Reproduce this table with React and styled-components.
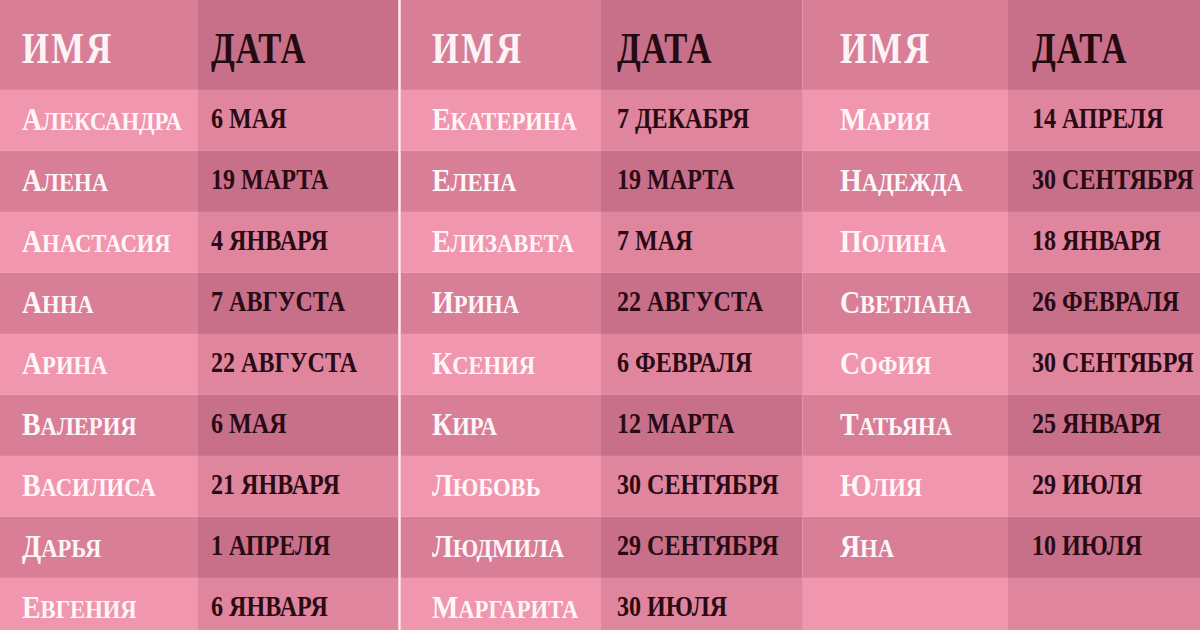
import React from "react";
import styled, { createGlobalStyle } from "styled-components";

const GlobalStyle = createGlobalStyle`
  html, body {
    margin: 0;
    padding: 0;
    width: 1200px;
    height: 630px;
    overflow: hidden;
    background: #f196af;
  }
`;

const columns = [
  {
    nameWidth: 198,
    dateWidth: 200,
    namePad: 22,
    datePad: 13,
    rows: [
      ["Александра", "6 мая"],
      ["Алена", "19 марта"],
      ["Анастасия", "4 января"],
      ["Анна", "7 августа"],
      ["Арина", "22 августа"],
      ["Валерия", "6 мая"],
      ["Василиса", "21 января"],
      ["Дарья", "1 апреля"],
      ["Евгения", "6 января"],
    ],
  },
  {
    nameWidth: 200,
    dateWidth: 201,
    namePad: 31,
    datePad: 16,
    rows: [
      ["Екатерина", "7 декабря"],
      ["Елена", "19 марта"],
      ["Елизавета", "7 мая"],
      ["Ирина", "22 августа"],
      ["Ксения", "6 февраля"],
      ["Кира", "12 марта"],
      ["Любовь", "30 сентября"],
      ["Людмила", "29 сентября"],
      ["Маргарита", "30 июля"],
    ],
  },
  {
    nameWidth: 205,
    dateWidth: 192,
    namePad: 37,
    datePad: 24,
    rows: [
      ["Мария", "14 апреля"],
      ["Надежда", "30 сентября"],
      ["Полина", "18 января"],
      ["Светлана", "26 февраля"],
      ["София", "30 сентября"],
      ["Татьяна", "25 января"],
      ["Юлия", "29 июля"],
      ["Яна", "10 июля"],
      ["", ""],
    ],
  },
];

// shade -> [name cell, date cell]
const palette = {
  dark: ["#d87e97", "#c86f89"],
  light: ["#f196af", "#df859e"],
};

function App() {
  return (
    <>
      <GlobalStyle />
      <Page>
        {columns.map((col, i) => (
          <React.Fragment key={i}>
            {i === 1 && <Divider />}
            {i === 2 && <Seam />}
            <Table $name={col.nameWidth} $date={col.dateWidth}>
              <NameCell $shade="dark" $pad={col.namePad} $head>
                <HeadText $light>Имя</HeadText>
              </NameCell>
              <DateCell $shade="dark" $pad={col.datePad} $head>
                <HeadText>Дата</HeadText>
              </DateCell>
              {col.rows.map(([name, date], r) => {
                const shade = r % 2 === 0 ? "light" : "dark";
                return (
                  <React.Fragment key={r}>
                    <NameCell $shade={shade} $pad={col.namePad}>
                      <NameText>{name}</NameText>
                    </NameCell>
                    <DateCell $shade={shade} $pad={col.datePad}>
                      <DateText>{date}</DateText>
                    </DateCell>
                  </React.Fragment>
                );
              })}
            </Table>
          </React.Fragment>
        ))}
      </Page>
    </>
  );
}

export default App;

const Page = styled.div`
  display: flex;
  width: 1200px;
  height: 630px;
  overflow: hidden;
  font-family: "Liberation Serif", "Times New Roman", serif;
  font-weight: 700;
`;

const Table = styled.div`
  display: grid;
  grid-template-columns: ${(p) => p.$name}px ${(p) => p.$date}px;
  grid-template-rows: 90px;
  grid-auto-rows: 61px;
  flex-shrink: 0;
`;

const Divider = styled.div`
  width: 3px;
  flex-shrink: 0;
  background: linear-gradient(90deg, #f7b9ca, #fff0f4 50%, #f7b9ca);
`;

const Seam = styled.div`
  width: 1px;
  flex-shrink: 0;
  background: #e394aa;
`;

const Cell = styled.div`
  display: flex;
  align-items: center;
  padding-left: ${(p) => p.$pad}px;
  padding-top: ${(p) => (p.$head ? 6 : 0)}px;
  padding-bottom: ${(p) => (p.$head ? 0 : 4)}px;
  white-space: nowrap;
  box-shadow: inset 0 -1px 0 rgba(255, 255, 255, 0.08);
`;

const NameCell = styled(Cell)`
  background: ${(p) => palette[p.$shade][0]};
`;

const DateCell = styled(Cell)`
  background: ${(p) => palette[p.$shade][1]};
`;

const HeadText = styled.span`
  display: inline-block;
  font-size: 45px;
  line-height: 1;
  text-transform: uppercase;
  letter-spacing: ${(p) => (p.$light ? "3px" : "1px")};
  color: ${(p) => (p.$light ? "#fdf3f6" : "#260a12")};
  transform: scaleX(0.77);
  transform-origin: left center;
`;

const NameText = styled.span`
  display: inline-block;
  font-size: 26px;
  line-height: 1;
  text-transform: uppercase;
  color: #fff6f8;
  transform: scaleX(0.87);
  transform-origin: left center;

  &::first-letter {
    font-size: 32px;
  }
`;

const DateText = styled.span`
  display: inline-block;
  font-size: 29px;
  line-height: 1;
  text-transform: uppercase;
  color: #2a0b14;
  transform: scaleX(0.83);
  transform-origin: left center;
`;
